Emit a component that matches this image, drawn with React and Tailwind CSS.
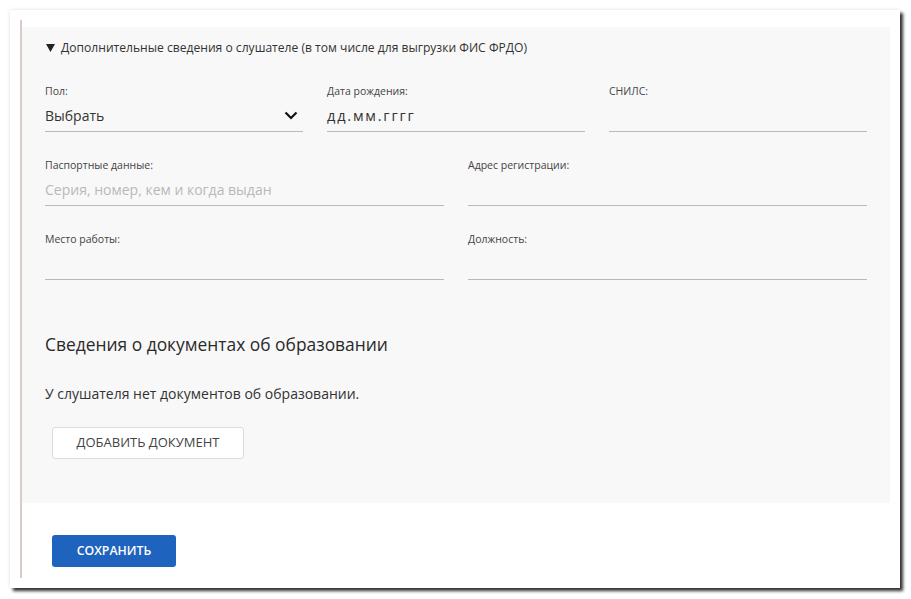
import React from 'react';

const Field = ({ label, value, placeholder, select, mono }) => (
    <div className="flex flex-col">
        <div className="h-[14px] text-[10.5px] leading-[14px] text-[#444]">{label}</div>
        <div className="mt-[2px] h-[32px] flex items-center justify-between border-b border-[#b9b9b9]">
            {value && (
                <span className={mono ? 'text-[14.5px] text-[#333] tracking-[1.8px]' : 'text-[14px] text-[#333]'}>{value}</span>
            )}
            {placeholder && <span className="text-[14px] text-[#b8b8b8]">{placeholder}</span>}
            {select && (
                <svg width="14" height="9" viewBox="0 0 14 9" className="mr-[5px]">
                    <path d="M1.5 1.5 L7 7 L12.5 1.5" fill="none" stroke="#111" strokeWidth="2.2" />
                </svg>
            )}
        </div>
    </div>
);

export default function App() {
    return (
        <div className="w-[911px] h-[599px] bg-white pt-[10px] pl-[10px]" style={{ fontFamily: '"Open Sans", "Noto Sans", sans-serif' }}>
            <div className="w-[890px] h-[578px] bg-white pl-[10px] pr-[10px] py-[10px] shadow-[3px_3px_3px_rgba(0,0,0,0.8),0_0_4px_rgba(0,0,0,0.12)]">
                <div className="h-full border-l-2 border-[#dbcbc6] pt-[7px]">
                    {/* Дополнительные сведения */}
                    <div className="bg-[#f8f8f8] pt-[12px] pl-[23px] pr-[23px] pb-[44px]">
                        <div className="h-[18px] flex items-center text-[12.1px] text-[#333]">
                            <svg width="9" height="8" viewBox="0 0 9 8" className="mr-[6px] ml-[1px]">
                                <path d="M0 0 H9 L4.5 8 Z" fill="#222" />
                            </svg>
                            Дополнительные сведения о слушателе (в том числе для выгрузки ФИС ФРДО)
                        </div>

                        <div className="mt-[27px] grid grid-cols-3 gap-x-[24px]">
                            <Field label="Пол:" value="Выбрать" select />
                            <Field label="Дата рождения:" value="дд.мм.гггг" mono />
                            <Field label="СНИЛС:" />
                        </div>

                        <div className="mt-[26px] grid grid-cols-2 gap-x-[24px]">
                            <Field label="Паспортные данные:" placeholder="Серия, номер, кем и когда выдан" />
                            <Field label="Адрес регистрации:" />
                        </div>

                        <div className="mt-[26px] grid grid-cols-2 gap-x-[24px]">
                            <Field label="Место работы:" />
                            <Field label="Должность:" />
                        </div>

                        <h3 className="mt-[52px] text-[17.4px] leading-[24px] text-[#2a2a2a]">Сведения о документах об образовании</h3>
                        <p className="mt-[28px] text-[14px] leading-[20px] text-[#333]">У слушателя нет документов об образовании.</p>
                        <button className="mt-[23px] ml-[7px] h-[32px] w-[192px] bg-white border border-[#dcdcdc] rounded-[3px] text-[13px] text-[#444]">
                            ДОБАВИТЬ ДОКУМЕНТ
                        </button>
                    </div>

                    <div className="pt-[32px] pl-[30px]">
                        <button className="h-[32px] w-[124px] bg-[#1e63be] rounded-[3px] text-white text-[12.3px] font-semibold">
                            СОХРАНИТЬ
                        </button>
                    </div>
                </div>
            </div>
        </div>
    );
}
